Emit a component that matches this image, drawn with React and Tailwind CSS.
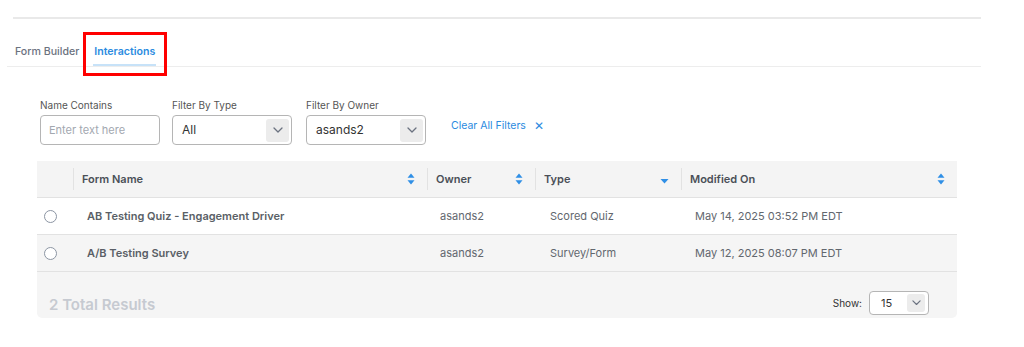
import React from "react";

const SortBoth = () => (
  <svg width="8" height="12" viewBox="0 0 8 12" className="shrink-0">
    <path d="M4 0.5L7.5 4.8H0.5Z" fill="#2f8fe6" />
    <path d="M4 11.5L7.5 7.2H0.5Z" fill="#2f8fe6" />
  </svg>
);

const SortDown = () => (
  <svg width="9" height="12" viewBox="0 0 9 12" className="shrink-0">
    <path d="M4.5 10.5L8.5 6H0.5Z" fill="#2f8fe6" />
  </svg>
);

const Chevron = ({ size = 10 }) => (
  <svg width={size} height={size * 0.6} viewBox="0 0 10 6" fill="none">
    <path d="M1 1l4 4 4-4" stroke="#6b7280" strokeWidth="1.3" strokeLinecap="round" strokeLinejoin="round" />
  </svg>
);

const Select = ({ value }) => (
  <div className="w-[120px] h-[30px] border border-[#b5b5b5] rounded-[4px] bg-white flex items-center justify-between pl-[9px] pr-[2px]">
    <span className="text-[12px] text-[#333]">{value}</span>
    <div className="w-[23px] h-[23px] rounded-[3px] bg-[#ececec] flex items-center justify-center">
      <Chevron />
    </div>
  </div>
);

const rows = [
  { name: "AB Testing Quiz - Engagement Driver", owner: "asands2", type: "Scored Quiz", date: "May 14, 2025 03:52 PM EDT", bg: "bg-white" },
  { name: "A/B Testing Survey", owner: "asands2", type: "Survey/Form", date: "May 12, 2025 08:07 PM EDT", bg: "bg-[#f5f5f5]" },
];

const HeaderCell = ({ label, width, icon }) => (
  <div className={`${width} h-full flex items-center relative`}>
    <div className="absolute left-0 top-[7px] bottom-[7px] w-px bg-[#e2e2e2]" />
    <div className="flex-1 flex items-center justify-between pl-[9px] pr-[12px]">
      <span className="text-[11px] font-semibold text-[#4a4f57]">{label}</span>
      {icon}
    </div>
  </div>
);

export default function App() {
  return (
    <div className="w-[1024px] h-[347px] bg-white font-['Inter',sans-serif] overflow-hidden">
      <div className="pt-[17px] pl-[13px]">
        <div className="w-[968px] h-[2px] bg-[#e9e9e9]" />
      </div>

      <div className="ml-[7px] w-[974px] h-[48px] border-b border-[#ededed] flex items-end pl-[8px]">
        <div className="h-full flex items-center text-[10.6px] text-[#6b7280] font-medium pt-[18px]">Form Builder</div>
        <div className="relative h-full ml-[15px] flex items-center pt-[18px]">
          <span className="text-[10.6px] font-semibold text-[#2b8be0]">Interactions</span>
          <div className="absolute left-[-1px] right-[-1px] bottom-[0px] h-[2px] bg-[#c7e2f8]" />
          <div className="absolute left-[-11px] right-[-12px] top-[13px] bottom-[-10px] border-[3px] border-[#ff0000]" />
        </div>
      </div>

      <div className="ml-[40px] mt-[31px] flex items-end gap-[12px]">
        <div className="flex flex-col gap-[2px]">
          <span className="text-[10px] text-[#555]">Name Contains</span>
          <div className="w-[120px] h-[30px] border border-[#b5b5b5] rounded-[4px] bg-white flex items-center pl-[8px]">
            <span className="text-[11px] text-[#a3a8b0]">Enter text here</span>
          </div>
        </div>
        <div className="flex flex-col gap-[2px]">
          <span className="text-[10px] text-[#555]">Filter By Type</span>
          <Select value="All" />
        </div>
        <div className="flex flex-col gap-[2px] ml-[2px]">
          <span className="text-[10px] text-[#555]">Filter By Owner</span>
          <Select value="asands2" />
        </div>
        <div className="h-[30px] flex items-center ml-[13px] mb-[4px] gap-[8px]">
          <span className="text-[10.5px] text-[#2b8be0]">Clear All Filters</span>
          <span className="text-[12px] text-[#2b8be0]">✕</span>
        </div>
      </div>

      <div className="ml-[37px] mt-[16px] w-[920px]">
        <div className="h-[37px] bg-[#f4f4f4] border-b border-[#e2e2e2] flex">
          <div className="w-[36px]" />
          <HeaderCell label="Form Name" width="w-[354px]" icon={<SortBoth />} />
          <HeaderCell label="Owner" width="w-[108px]" icon={<SortBoth />} />
          <HeaderCell label="Type" width="w-[146px]" icon={<SortDown />} />
          <HeaderCell label="Modified On" width="w-[276px]" icon={<SortBoth />} />
        </div>
        {rows.map((r) => (
          <div key={r.name} className={`h-[37px] ${r.bg} border-b border-[#e2e2e2] flex items-center text-[11px]`}>
            <div className="w-[36px] flex justify-start pl-[7px]">
              <div className="w-[13px] h-[13px] rounded-full border border-[#8c95a3] bg-white" />
            </div>
            <div className="w-[354px] pl-[14px] font-semibold text-[#5a5f66]">{r.name}</div>
            <div className="w-[108px] pl-[13px] text-[#62676e]">{r.owner}</div>
            <div className="w-[146px] pl-[15px] text-[#62676e]">{r.type}</div>
            <div className="w-[276px] pl-[14px] text-[#62676e]">{r.date}</div>
          </div>
        ))}
        <div className="h-[46px] bg-[#f5f5f5] rounded-b-[5px] flex items-end justify-between pl-[12px] pr-[28px] pb-[3px]">
          <span className="text-[15px] font-semibold text-[#c6cad1] leading-[20px]">2 Total Results</span>
          <div className="flex items-center gap-[7px]">
            <span className="text-[10px] text-[#333]">Show:</span>
            <div className="w-[60px] h-[24px] border border-[#b5b5b5] rounded-[4px] bg-white flex items-center justify-between pl-[11px] pr-[3px]">
              <span className="text-[11px] text-[#333]">15</span>
              <div className="w-[18px] h-[18px] rounded-[3px] bg-[#ececec] flex items-center justify-center">
                <Chevron size={9} />
              </div>
            </div>
          </div>
        </div>
      </div>
    </div>
  );
}
